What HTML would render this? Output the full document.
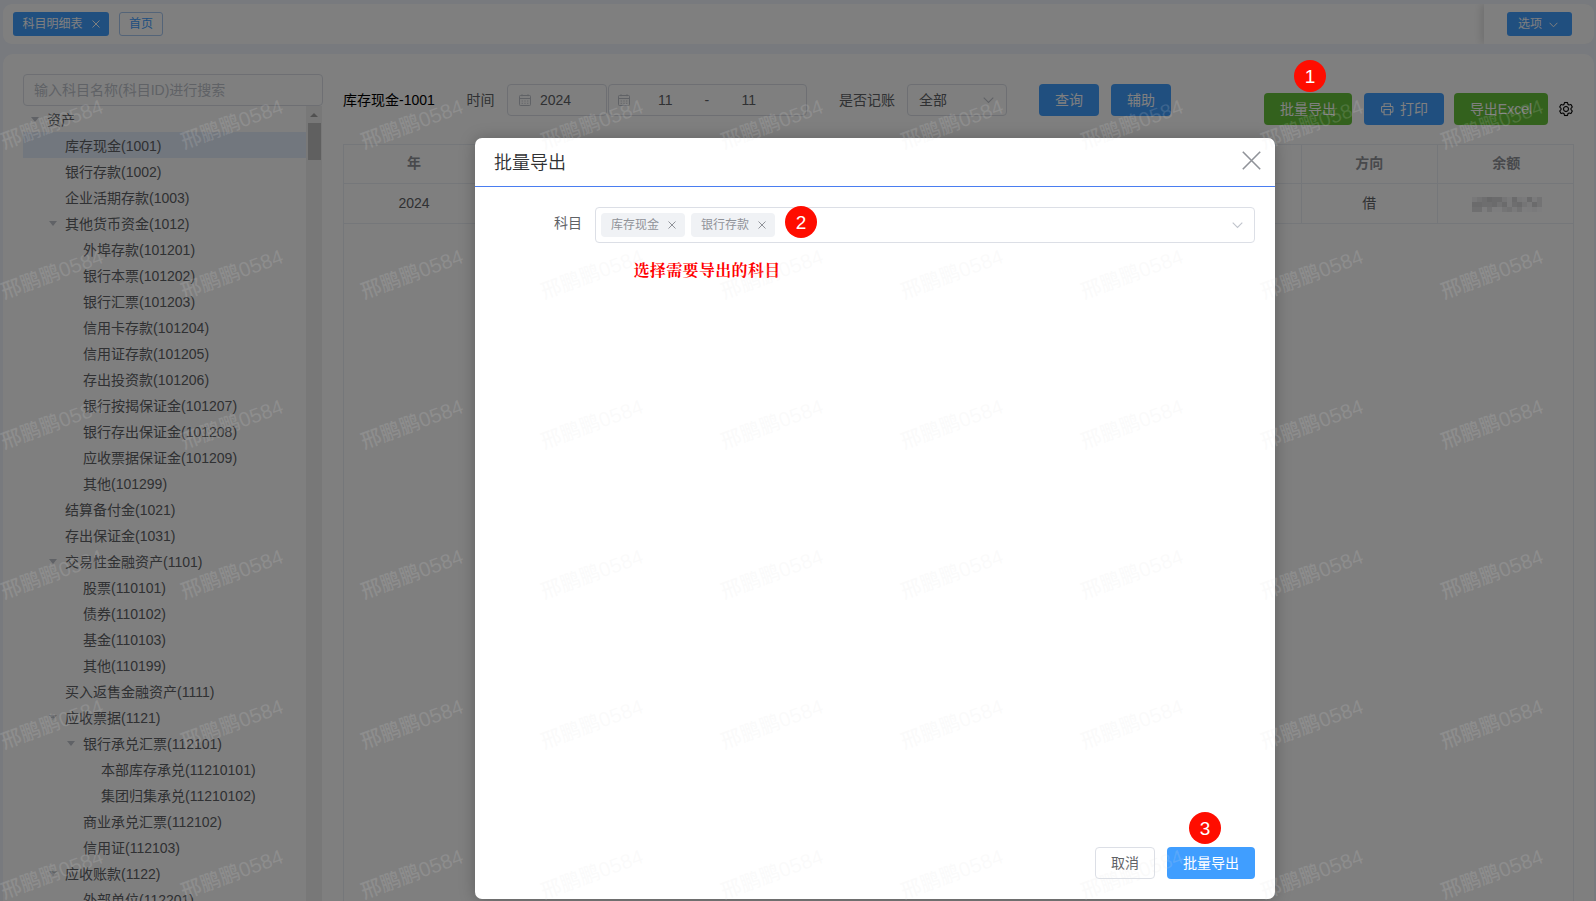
<!DOCTYPE html>
<html lang="zh-CN">
<head>
<meta charset="utf-8">
<title>科目明细表</title>
<style>
*{box-sizing:border-box;margin:0;padding:0}
html,body{width:1596px;height:901px;overflow:hidden}
body{position:relative;background:#f1f4fc;font-family:"Liberation Sans","Noto Sans CJK SC",sans-serif;font-size:14px;color:#606266}
.abs{position:absolute}
/* ---------- top tab bar ---------- */
#tabbar{position:absolute;left:3px;top:4px;width:1591px;height:40px;background:#fff;border-radius:9px;overflow:hidden}
#tabbar .right{position:absolute;right:0;top:0;width:110px;height:40px;background:#fff;border-radius:0 9px 9px 0;box-shadow:-3px 0 8px rgba(0,0,0,.13)}
.tab{position:absolute;top:8px;height:24px;line-height:24px;font-size:12px;border-radius:3px;white-space:nowrap}
.tab.on{left:10px;width:96px;background:#409eff;color:#fff;padding-left:9.6px}
.tab.off{left:116px;width:44px;border:1px solid #a8c8f0;color:#409eff;text-align:center;line-height:22px;background:#fff}
.tab.opt{left:23px;width:65px;background:#409eff;color:#fff;padding-left:11px}
/* ---------- main card ---------- */
#main{position:absolute;left:3px;top:54px;width:1591px;height:900px;background:#fff;border-radius:10px}
#search{position:absolute;left:23px;top:74px;width:300px;height:32px;border:1px solid #dcdfe6;border-radius:4px;background:#fff;line-height:30px;padding-left:10px;color:#c0c4cc;font-size:14px}
#tree{position:absolute;left:23px;top:106px;width:283px;height:800px;overflow:hidden}
.row{height:26px;line-height:28px;white-space:nowrap;position:relative;color:#606266;font-size:14px}
.row.sel{background:#e4eefc}
.car{position:absolute;margin-left:-16.5px;top:11px;width:0;height:0;border-left:4.5px solid transparent;border-right:4.5px solid transparent;border-top:5.5px solid #c0c4cc}
#sbar{position:absolute;left:306px;top:106px;width:16px;height:800px;background:#f1f1f1}
#sbar .thumb{position:absolute;left:1.5px;top:17px;width:13px;height:37px;background:#c1c1c1}
#sbar .up{position:absolute;left:4px;top:7px;width:0;height:0;border-left:4px solid transparent;border-right:4px solid transparent;border-bottom:4px solid #a3a3a3}
/* ---------- filter row ---------- */
.lbl{position:absolute;top:84px;height:32px;line-height:32px;font-size:14px;color:#606266;white-space:nowrap}
.inp{position:absolute;top:84px;height:32px;border:1px solid #dcdfe6;border-radius:4px;background:#fff;line-height:30px;font-size:14px;color:#606266}
.inp span{position:absolute;top:0}
.btn{position:absolute;height:32px;line-height:32px;border-radius:4px;color:#fff;font-size:14px;text-align:center;white-space:nowrap}
.blue{background:#409eff}
.green{background:#67c23a}
/* ---------- table ---------- */
#tbl{position:absolute;left:343px;top:144px;width:1231px;height:800px;border:1px solid #ebeef5}
#tbl .hr{position:absolute;left:0;top:0;width:100%;height:39px;border-bottom:1px solid #ebeef5}
#tbl .dr{position:absolute;left:0;top:39px;width:100%;height:40px;border-bottom:1px solid #ebeef5}
#tbl .c{position:absolute;top:0;height:100%;width:136.5px;border-right:1px solid #ebeef5;text-align:center;line-height:37px;font-size:14px}
#tbl .hr .c{color:#909399;font-weight:bold}
#tbl .dr .c{color:#606266;line-height:39px}
.mos{position:absolute;left:34px;top:13px;width:70px;height:15px}
.mos i{position:absolute;width:5px;height:5px}
/* ---------- overlay & dialog ---------- */
#mask{position:absolute;left:0;top:0;width:1596px;height:901px;background:rgba(0,0,0,.5)}
#dlg{position:absolute;left:475px;top:138px;width:800px;height:761px;background:#fff;border-radius:7px;box-shadow:0 1px 16px rgba(0,0,0,.26)}
#dlg .title{position:absolute;left:19px;top:12.5px;font-weight:350;font-size:18px;line-height:24px;color:#303133}
#dlg .hline{position:absolute;left:0;top:48px;width:100%;height:1px;background:#4a7df0}
#dlg .flabel{position:absolute;left:79px;top:69px;height:32px;line-height:32px;font-size:14px;color:#606266}
#dlg .sel{position:absolute;left:120px;top:69px;width:660px;height:36px;border:1px solid #dcdfe6;border-radius:4px;background:#fff}
.tag{position:absolute;top:5px;height:24px;width:84px;line-height:24px;background:#f0f2f5;border-radius:4px;color:#909399;font-size:12px;padding-left:10px;white-space:nowrap}
.tag svg{position:absolute;left:67px;top:8px}
.note{position:absolute;left:158.5px;top:121.5px;letter-spacing:.35px;font-family:"Liberation Serif","Noto Serif CJK SC",serif;font-weight:bold;font-size:16px;line-height:22px;color:#ff0000;white-space:nowrap}
.dot{position:absolute;width:32px;height:32px;border-radius:50%;background:#ff0d00;color:#fff;font-size:19px;line-height:34px;text-align:center;font-family:"Liberation Sans",sans-serif}
.fbtn{position:absolute;top:709px;height:32px;line-height:30px;border-radius:4px;font-size:14px;text-align:center;white-space:nowrap}
.fbtn.cancel{left:620px;width:60px;border:1px solid #dcdfe6;color:#606266;background:#fff}
.fbtn.ok{left:692px;width:88px;background:#409eff;color:#fff;line-height:32px}
/* ---------- watermark ---------- */
#wmk{position:absolute;left:0;top:0;width:1596px;height:901px;overflow:hidden;pointer-events:none}
.wm{position:absolute;width:120px;height:30px;line-height:30px;text-align:center;font-size:20.5px;font-weight:500;color:rgba(226,226,226,.155);transform:rotate(-20deg);white-space:nowrap;font-family:"Liberation Sans","Noto Sans CJK SC",sans-serif}
</style>
</head>
<body>

<!-- top tab bar -->
<div id="tabbar">
  <div class="tab on">科目明细表<svg style="position:absolute;left:79px;top:8px" width="8" height="8" viewBox="0 0 8 8"><path d="M0.5 0.5L7.5 7.5M7.5 0.5L0.5 7.5" stroke="#fff" stroke-width="1" fill="none"/></svg></div>
  <div class="tab off">首页</div>
  <div class="right">
    <div class="tab opt">选项<svg style="position:absolute;left:42px;top:10px" width="9" height="6" viewBox="0 0 9 6"><path d="M0.6 0.8L4.5 4.8L8.4 0.8" stroke="#fff" stroke-width="1" fill="none"/></svg></div>
  </div>
</div>

<!-- main card -->
<div id="main"></div>
<div id="search">输入科目名称(科目ID)进行搜索</div>
<div id="tree">
<div class="row" style="padding-left:24px"><i class="car"></i>资产</div>
<div class="row sel" style="padding-left:42px">库存现金(1001)</div>
<div class="row" style="padding-left:42px">银行存款(1002)</div>
<div class="row" style="padding-left:42px">企业活期存款(1003)</div>
<div class="row" style="padding-left:42px"><i class="car"></i>其他货币资金(1012)</div>
<div class="row" style="padding-left:60px">外埠存款(101201)</div>
<div class="row" style="padding-left:60px">银行本票(101202)</div>
<div class="row" style="padding-left:60px">银行汇票(101203)</div>
<div class="row" style="padding-left:60px">信用卡存款(101204)</div>
<div class="row" style="padding-left:60px">信用证存款(101205)</div>
<div class="row" style="padding-left:60px">存出投资款(101206)</div>
<div class="row" style="padding-left:60px">银行按揭保证金(101207)</div>
<div class="row" style="padding-left:60px">银行存出保证金(101208)</div>
<div class="row" style="padding-left:60px">应收票据保证金(101209)</div>
<div class="row" style="padding-left:60px">其他(101299)</div>
<div class="row" style="padding-left:42px">结算备付金(1021)</div>
<div class="row" style="padding-left:42px">存出保证金(1031)</div>
<div class="row" style="padding-left:42px"><i class="car"></i>交易性金融资产(1101)</div>
<div class="row" style="padding-left:60px">股票(110101)</div>
<div class="row" style="padding-left:60px">债券(110102)</div>
<div class="row" style="padding-left:60px">基金(110103)</div>
<div class="row" style="padding-left:60px">其他(110199)</div>
<div class="row" style="padding-left:42px">买入返售金融资产(1111)</div>
<div class="row" style="padding-left:42px"><i class="car"></i>应收票据(1121)</div>
<div class="row" style="padding-left:60px"><i class="car"></i>银行承兑汇票(112101)</div>
<div class="row" style="padding-left:78px">本部库存承兑(11210101)</div>
<div class="row" style="padding-left:78px">集团归集承兑(11210102)</div>
<div class="row" style="padding-left:60px">商业承兑汇票(112102)</div>
<div class="row" style="padding-left:60px">信用证(112103)</div>
<div class="row" style="padding-left:42px"><i class="car"></i>应收账款(1122)</div>
<div class="row" style="padding-left:60px">外部单位(112201)</div>
</div>
<div id="sbar"><i class="up"></i><i class="thumb"></i></div>

<!-- filter row -->
<div class="lbl" style="left:343px;color:#000">库存现金-1001</div>
<div class="lbl" style="left:466.5px">时间</div>
<div class="inp" style="left:507px;width:100px">
  <svg style="position:absolute;left:11px;top:9px" width="12" height="12" viewBox="0 0 12 12"><rect x="0.5" y="1.5" width="11" height="10" rx="0.8" fill="none" stroke="#c0c4cc"/><path d="M0.5 4.5H11.5M3 0.3V2.2M9 0.3V2.2" stroke="#c0c4cc" fill="none"/><path d="M2.6 7H4M5.3 7H6.7M8 7H9.4M2.6 9.3H4M5.3 9.3H6.7M8 9.3H9.4" stroke="#c0c4cc" stroke-width="0.8" fill="none"/></svg>
  <span style="left:32px">2024</span>
</div>
<div class="inp" style="left:607.5px;width:199.5px">
  <svg style="position:absolute;left:9.5px;top:9px" width="12" height="12" viewBox="0 0 12 12"><rect x="0.5" y="1.5" width="11" height="10" rx="0.8" fill="none" stroke="#c0c4cc"/><path d="M0.5 4.5H11.5M3 0.3V2.2M9 0.3V2.2" stroke="#c0c4cc" fill="none"/><path d="M2.6 7H4M5.3 7H6.7M8 7H9.4M2.6 9.3H4M5.3 9.3H6.7M8 9.3H9.4" stroke="#c0c4cc" stroke-width="0.8" fill="none"/></svg>
  <span style="left:49.5px">11</span><span style="left:96px">-</span><span style="left:133px">11</span>
</div>
<div class="lbl" style="left:839px">是否记账</div>
<div class="inp" style="left:907px;width:100px">
  <span style="left:11px">全部</span>
  <svg style="position:absolute;left:75px;top:12px" width="11" height="7" viewBox="0 0 11 7"><path d="M0.7 0.7L5.5 5.5L10.3 0.7" stroke="#c0c4cc" stroke-width="1.1" fill="none"/></svg>
</div>
<div class="btn blue" style="left:1039px;top:84px;width:60px">查询</div>
<div class="btn blue" style="left:1111px;top:84px;width:60px">辅助</div>

<div class="btn green" style="left:1264px;top:93px;width:88px">批量导出</div>
<div class="btn blue" style="left:1364px;top:93px;width:80px;text-align:left;padding-left:36px">
  <svg style="position:absolute;left:17px;top:10px" width="12.5" height="12.5" viewBox="0 0 13 13"><path d="M3.2 3.5V0.8H9.8V3.5M3.2 9.5H1.4Q0.6 9.5 0.6 8.7V4.5Q0.6 3.6 1.4 3.6H11.6Q12.4 3.6 12.4 4.5V8.7Q12.4 9.5 11.6 9.5H9.8M3.2 6.8H9.8V12.2H3.2Z" fill="none" stroke="#fff" stroke-width="1.1"/></svg>打印</div>
<div class="btn green" style="left:1454px;top:93px;width:94px">导出Excel</div>
<svg class="abs" style="left:1558px;top:101px" width="16" height="16" viewBox="0 0 1024 1024"><path fill="#000" stroke="#000" stroke-width="8" d="M600.7 64a32 32 0 0 1 30.5 22.2l35.2 109.1c14.8 7.2 28.9 15.4 42.4 24.5l112.1-24.1a32 32 0 0 1 34.4 15.3L944 364.8a32 32 0 0 1-4 37.5l-77 84.9a357 357 0 0 1 0 48.9l77 85a32 32 0 0 1 4 37.6l-88.7 153.7a32 32 0 0 1-34.4 15.3L708.8 803.600c-13.400 9.100-27.600 17.300-42.300 24.500l-35.200 109.100a32 32 0 0 1-30.500 22.200H423.300a32 32 0 0 1-30.500-22.200L357.700 828.200a351.600 351.600 0 0 1-42.500-24.600l-112 24.100a32 32 0 0 1-34.400-15.300L80 658.800a32 32 0 0 1 4-37.600l77-85a357 357 0 0 1 0-48.800l-77-85a32 32 0 0 1-4-37.500l88.700-153.800a32 32 0 0 1 34.400-15.300l112 24.100c13.600-9.100 27.800-17.400 42.600-24.600l35.200-109a32 32 0 0 1 30.400-22.200h177.400zm-23.400 64H446.600l-36.400 113-24.500 12a290 290 0 0 0-34.900 20.100l-22.700 15.300-116.100-25-65.300 113.300 79.700 88-1.900 27.200a293 293 0 0 0 0 40.100l1.900 27.300-79.800 88 65.300 113.200 116.200-24.900 22.700 15.200c11.100 7.500 22.800 14.200 34.800 20.100l24.500 12 36.500 113.100h130.800l36.500-113.200 24.400-12a290 290 0 0 0 34.800-20.100l22.600-15.200 116.200 24.900 65.300-113.200-79.700-88 1.900-27.300a293 293 0 0 0 0-40.200l-1.900-27.200 79.800-88-65.400-113.300-116.100 24.900-22.700-15.200a287 287 0 0 0-34.800-20.100l-24.400-12L577.300 128zM512 320c106 0 192 86 192 192s-86 192-192 192-192-86-192-192 86-192 192-192zm0 64a128 128 0 1 0 0 256 128 128 0 0 0 0-256z"/></svg>

<!-- table -->
<div id="tbl">
  <div class="hr">
    <div class="c" style="left:0;width:141px">年</div>
    <div class="c" style="left:138px"></div><div class="c" style="left:274.5px"></div><div class="c" style="left:411px"></div><div class="c" style="left:547.5px"></div><div class="c" style="left:684px"></div><div class="c" style="left:821px"></div>
    <div class="c" style="left:957.5px">方向</div>
    <div class="c" style="left:1094px;border-right:0">余额</div>
  </div>
  <div class="dr">
    <div class="c" style="left:0;width:141px">2024</div>
    <div class="c" style="left:138px"></div><div class="c" style="left:274.5px"></div><div class="c" style="left:411px"></div><div class="c" style="left:547.5px"></div><div class="c" style="left:684px"></div><div class="c" style="left:821px"></div>
    <div class="c" style="left:957.5px">借</div>
    <div class="c" style="left:1094px;border-right:0"><div class="mos"><i style="left:0px;top:0px;background:rgb(240,240,242)"></i><i style="left:5px;top:0px;background:rgb(230,230,232)"></i><i style="left:10px;top:0px;background:rgb(220,220,222)"></i><i style="left:15px;top:0px;background:rgb(208,208,210)"></i><i style="left:20px;top:0px;background:rgb(214,214,216)"></i><i style="left:25px;top:0px;background:rgb(214,214,216)"></i><i style="left:30px;top:0px;background:rgb(234,234,236)"></i><i style="left:35px;top:0px;background:rgb(244,244,246)"></i><i style="left:40px;top:0px;background:rgb(214,214,216)"></i><i style="left:45px;top:0px;background:rgb(240,240,242)"></i><i style="left:50px;top:0px;background:rgb(244,244,246)"></i><i style="left:55px;top:0px;background:rgb(214,214,216)"></i><i style="left:60px;top:0px;background:rgb(244,244,246)"></i><i style="left:65px;top:0px;background:rgb(230,230,232)"></i><i style="left:0px;top:5px;background:rgb(214,214,216)"></i><i style="left:5px;top:5px;background:rgb(214,214,216)"></i><i style="left:10px;top:5px;background:rgb(220,220,222)"></i><i style="left:15px;top:5px;background:rgb(220,220,222)"></i><i style="left:20px;top:5px;background:rgb(214,214,216)"></i><i style="left:25px;top:5px;background:rgb(230,230,232)"></i><i style="left:30px;top:5px;background:rgb(214,214,216)"></i><i style="left:35px;top:5px;background:rgb(244,244,246)"></i><i style="left:40px;top:5px;background:rgb(220,220,222)"></i><i style="left:45px;top:5px;background:rgb(214,214,216)"></i><i style="left:50px;top:5px;background:rgb(234,234,236)"></i><i style="left:55px;top:5px;background:rgb(244,244,246)"></i><i style="left:60px;top:5px;background:rgb(214,214,216)"></i><i style="left:65px;top:5px;background:rgb(230,230,232)"></i><i style="left:0px;top:10px;background:rgb(222,222,224)"></i><i style="left:5px;top:10px;background:rgb(222,222,224)"></i><i style="left:10px;top:10px;background:rgb(250,250,252)"></i><i style="left:15px;top:10px;background:rgb(228,228,230)"></i><i style="left:20px;top:10px;background:rgb(250,250,252)"></i><i style="left:25px;top:10px;background:rgb(250,250,252)"></i><i style="left:30px;top:10px;background:rgb(234,234,236)"></i><i style="left:35px;top:10px;background:rgb(228,228,230)"></i><i style="left:40px;top:10px;background:rgb(244,244,246)"></i><i style="left:45px;top:10px;background:rgb(228,228,230)"></i><i style="left:50px;top:10px;background:rgb(250,250,252)"></i><i style="left:55px;top:10px;background:rgb(248,248,250)"></i><i style="left:60px;top:10px;background:rgb(244,244,246)"></i><i style="left:65px;top:10px;background:rgb(250,250,252)"></i></div></div>
  </div>
</div>

<!-- modal mask -->
<div id="mask"></div>
<div class="dot" style="left:1294px;top:60px">1</div>

<!-- dialog -->
<div id="dlg">
  <div class="title">批量导出</div>
  <svg style="position:absolute;left:766.5px;top:12.5px" width="19" height="19" viewBox="0 0 19 19"><path d="M0.8 0.8L18.2 18.2M18.2 0.8L0.8 18.2" stroke="#909399" stroke-width="1.6" fill="none"/></svg>
  <div class="hline"></div>
  <div class="flabel">科目</div>
  <div class="sel">
    <div class="tag" style="left:5px">库存现金<svg width="8" height="8" viewBox="0 0 8 8"><path d="M0.5 0.5L7.5 7.5M7.5 0.5L0.5 7.5" stroke="#909399" stroke-width="1" fill="none"/></svg></div>
    <div class="tag" style="left:95px">银行存款<svg width="8" height="8" viewBox="0 0 8 8"><path d="M0.5 0.5L7.5 7.5M7.5 0.5L0.5 7.5" stroke="#909399" stroke-width="1" fill="none"/></svg></div>
    <svg style="position:absolute;left:636px;top:14px" width="11" height="7" viewBox="0 0 11 7"><path d="M0.7 0.7L5.5 5.5L10.3 0.7" stroke="#c0c4cc" stroke-width="1.1" fill="none"/></svg>
  </div>
  <div class="dot" style="left:310px;top:68px">2</div>
  <div class="note">选择需要导出的科目</div>
  <div class="dot" style="left:714px;top:674px">3</div>
  <div class="fbtn cancel">取消</div>
  <div class="fbtn ok">批量导出</div>
</div>

<!-- watermark -->
<div id="wmk">
<span class="wm" style="left:-8px;top:109px">邢鹏鹏0584</span>
<span class="wm" style="left:172px;top:109px">邢鹏鹏0584</span>
<span class="wm" style="left:352px;top:109px">邢鹏鹏0584</span>
<span class="wm" style="left:532px;top:109px">邢鹏鹏0584</span>
<span class="wm" style="left:712px;top:109px">邢鹏鹏0584</span>
<span class="wm" style="left:892px;top:109px">邢鹏鹏0584</span>
<span class="wm" style="left:1072px;top:109px">邢鹏鹏0584</span>
<span class="wm" style="left:1252px;top:109px">邢鹏鹏0584</span>
<span class="wm" style="left:1432px;top:109px">邢鹏鹏0584</span>
<span class="wm" style="left:1612px;top:109px">邢鹏鹏0584</span>
<span class="wm" style="left:-8px;top:259px">邢鹏鹏0584</span>
<span class="wm" style="left:172px;top:259px">邢鹏鹏0584</span>
<span class="wm" style="left:352px;top:259px">邢鹏鹏0584</span>
<span class="wm" style="left:532px;top:259px">邢鹏鹏0584</span>
<span class="wm" style="left:712px;top:259px">邢鹏鹏0584</span>
<span class="wm" style="left:892px;top:259px">邢鹏鹏0584</span>
<span class="wm" style="left:1072px;top:259px">邢鹏鹏0584</span>
<span class="wm" style="left:1252px;top:259px">邢鹏鹏0584</span>
<span class="wm" style="left:1432px;top:259px">邢鹏鹏0584</span>
<span class="wm" style="left:1612px;top:259px">邢鹏鹏0584</span>
<span class="wm" style="left:-8px;top:409px">邢鹏鹏0584</span>
<span class="wm" style="left:172px;top:409px">邢鹏鹏0584</span>
<span class="wm" style="left:352px;top:409px">邢鹏鹏0584</span>
<span class="wm" style="left:532px;top:409px">邢鹏鹏0584</span>
<span class="wm" style="left:712px;top:409px">邢鹏鹏0584</span>
<span class="wm" style="left:892px;top:409px">邢鹏鹏0584</span>
<span class="wm" style="left:1072px;top:409px">邢鹏鹏0584</span>
<span class="wm" style="left:1252px;top:409px">邢鹏鹏0584</span>
<span class="wm" style="left:1432px;top:409px">邢鹏鹏0584</span>
<span class="wm" style="left:1612px;top:409px">邢鹏鹏0584</span>
<span class="wm" style="left:-8px;top:559px">邢鹏鹏0584</span>
<span class="wm" style="left:172px;top:559px">邢鹏鹏0584</span>
<span class="wm" style="left:352px;top:559px">邢鹏鹏0584</span>
<span class="wm" style="left:532px;top:559px">邢鹏鹏0584</span>
<span class="wm" style="left:712px;top:559px">邢鹏鹏0584</span>
<span class="wm" style="left:892px;top:559px">邢鹏鹏0584</span>
<span class="wm" style="left:1072px;top:559px">邢鹏鹏0584</span>
<span class="wm" style="left:1252px;top:559px">邢鹏鹏0584</span>
<span class="wm" style="left:1432px;top:559px">邢鹏鹏0584</span>
<span class="wm" style="left:1612px;top:559px">邢鹏鹏0584</span>
<span class="wm" style="left:-8px;top:709px">邢鹏鹏0584</span>
<span class="wm" style="left:172px;top:709px">邢鹏鹏0584</span>
<span class="wm" style="left:352px;top:709px">邢鹏鹏0584</span>
<span class="wm" style="left:532px;top:709px">邢鹏鹏0584</span>
<span class="wm" style="left:712px;top:709px">邢鹏鹏0584</span>
<span class="wm" style="left:892px;top:709px">邢鹏鹏0584</span>
<span class="wm" style="left:1072px;top:709px">邢鹏鹏0584</span>
<span class="wm" style="left:1252px;top:709px">邢鹏鹏0584</span>
<span class="wm" style="left:1432px;top:709px">邢鹏鹏0584</span>
<span class="wm" style="left:1612px;top:709px">邢鹏鹏0584</span>
<span class="wm" style="left:-8px;top:859px">邢鹏鹏0584</span>
<span class="wm" style="left:172px;top:859px">邢鹏鹏0584</span>
<span class="wm" style="left:352px;top:859px">邢鹏鹏0584</span>
<span class="wm" style="left:532px;top:859px">邢鹏鹏0584</span>
<span class="wm" style="left:712px;top:859px">邢鹏鹏0584</span>
<span class="wm" style="left:892px;top:859px">邢鹏鹏0584</span>
<span class="wm" style="left:1072px;top:859px">邢鹏鹏0584</span>
<span class="wm" style="left:1252px;top:859px">邢鹏鹏0584</span>
<span class="wm" style="left:1432px;top:859px">邢鹏鹏0584</span>
<span class="wm" style="left:1612px;top:859px">邢鹏鹏0584</span>
<span class="wm" style="left:-8px;top:1009px">邢鹏鹏0584</span>
<span class="wm" style="left:172px;top:1009px">邢鹏鹏0584</span>
<span class="wm" style="left:352px;top:1009px">邢鹏鹏0584</span>
<span class="wm" style="left:532px;top:1009px">邢鹏鹏0584</span>
<span class="wm" style="left:712px;top:1009px">邢鹏鹏0584</span>
<span class="wm" style="left:892px;top:1009px">邢鹏鹏0584</span>
<span class="wm" style="left:1072px;top:1009px">邢鹏鹏0584</span>
<span class="wm" style="left:1252px;top:1009px">邢鹏鹏0584</span>
<span class="wm" style="left:1432px;top:1009px">邢鹏鹏0584</span>
<span class="wm" style="left:1612px;top:1009px">邢鹏鹏0584</span>
</div>

</body>
</html>
